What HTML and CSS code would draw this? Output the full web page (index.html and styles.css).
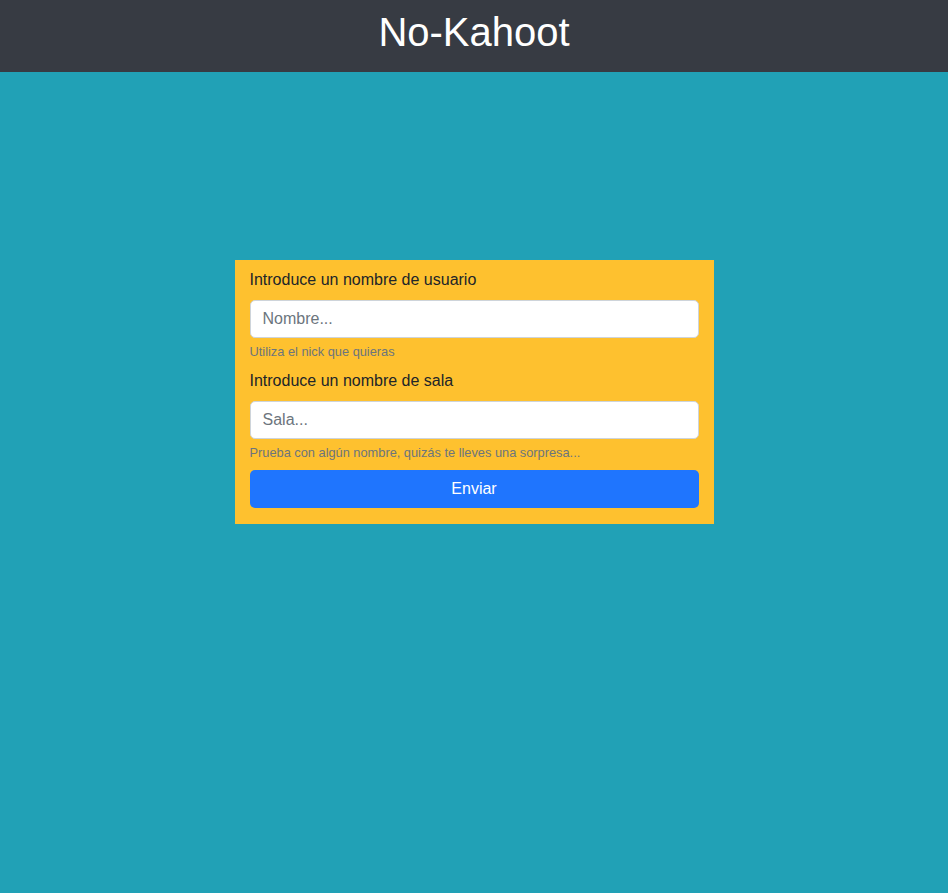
FILE: index.html
```html
<!DOCTYPE html>
<html lang="es">
<head>
<meta charset="utf-8">
<title>No-Kahoot</title>
<link rel="stylesheet" href="styles.css">
</head>
<body>
<header class="topbar">
  <h1 class="title">No-Kahoot</h1>
</header>
<main class="stage">
  <form class="card">
    <div class="group">
      <label class="label" for="nombre">Introduce un nombre de usuario</label>
      <input class="input" id="nombre" type="text" placeholder="Nombre...">
      <div class="help">Utiliza el nick que quieras</div>
    </div>
    <div class="group">
      <label class="label" for="sala">Introduce un nombre de sala</label>
      <input class="input" id="sala" type="text" placeholder="Sala...">
      <div class="help">Prueba con algún nombre, quizás te lleves una sorpresa...</div>
    </div>
    <button class="btn" type="button">Enviar</button>
  </form>
</main>
</body>
</html>
```

FILE: styles.css
```css
* { box-sizing: border-box; }
html, body {
  margin: 0;
  height: 100%;
}
body {
  font-family: "Liberation Sans", Arial, sans-serif;
  font-size: 16px;
  line-height: 1.5;
  color: #212529;
  background: #21a1b6;
  display: flex;
  flex-direction: column;
}
.topbar {
  background: #373b43;
  height: 72px;
  display: flex;
  justify-content: center;
  padding-top: 8px;
}
.title {
  margin: 0;
  font-size: 40px;
  font-weight: 400;
  line-height: 48px;
  color: #ffffff;
}
.stage {
  flex: 1;
  display: flex;
  justify-content: center;
  align-items: flex-start;
  padding-top: 188px;
}
.card {
  width: 479px;
  background: #fec12f;
  padding: 8px 15px 16px;
  display: flex;
  flex-direction: column;
  gap: 6px;
}
.group {
  display: flex;
  flex-direction: column;
}
.label {
  display: block;
  line-height: 24px;
  margin-bottom: 8px;
}
.input {
  height: 38px;
  width: 100%;
  font-family: inherit;
  font-size: 16px;
  color: #212529;
  background: #fff;
  border: 1px solid #ced4da;
  border-radius: 5px;
  padding: 6px 12px;
  outline: none;
}
.input::placeholder {
  color: #6c757d;
  opacity: 1;
}
.help {
  margin-top: 4px;
  margin-bottom: 2px;
  font-size: 12.8px;
  line-height: 19px;
  color: #6c757d;
}
.btn {
  height: 38px;
  width: 100%;
  border: 0;
  border-radius: 5px;
  background: #1f75fe;
  color: #fff;
  font-family: inherit;
  font-size: 16px;
  cursor: pointer;
}
```
